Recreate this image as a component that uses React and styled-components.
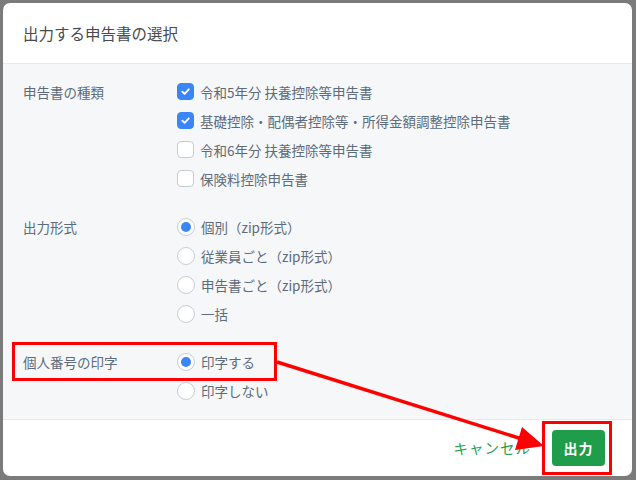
import styled, { createGlobalStyle } from 'styled-components';

const GlobalStyle = createGlobalStyle`
    html, body {
        margin: 0;
        padding: 0;
        width: 636px;
        height: 480px;
        overflow: hidden;
    }
    body {
        font-family: "Noto Sans CJK JP", "Noto Sans", sans-serif;
        background: #7b7b7b;
    }
`

const Backdrop = styled.div`
    position: relative;
    width: 636px;
    height: 480px;
    box-sizing: border-box;
    padding: 3px 4px 4px 3px;
    display: flex;
`

const Modal = styled.div`
    flex: 1;
    display: flex;
    flex-direction: column;
    background: #ffffff;
    border-radius: 7px;
    overflow: hidden;
`

const Header = styled.div`
    height: 62px;
    box-sizing: border-box;
    display: flex;
    align-items: center;
    padding: 0 20px 1px;
    border-bottom: 1px solid #e6e9ec;
    font-size: 15.5px;
    color: #474b50;
`

const Body = styled.div`
    flex: 1;
    background: #f5f7f9;
    padding: 13px 20px 14px;
    display: flex;
    flex-direction: column;
    gap: 19px;
    border-bottom: 1px solid #e6e9ec;
`

const Section = styled.div`
    display: grid;
    grid-template-columns: 154px 1fr;
`

const Label = styled.div`
    height: 29px;
    display: flex;
    align-items: center;
    font-size: 13.5px;
    color: #5d6b7a;
`

const Options = styled.div`
    display: flex;
    flex-direction: column;
`

const Option = styled.label`
    height: 29px;
    display: flex;
    align-items: center;
    gap: 6px;
    font-size: 13.5px;
    color: #5d6b7a;
`

const Check = styled.span`
    width: 17px;
    height: 17px;
    box-sizing: border-box;
    border-radius: 4px;
    border: 1px solid ${p => (p.$on ? '#3b86f6' : '#c3cbd3')};
    background: ${p => (p.$on ? '#3b86f6' : '#ffffff')};
    display: flex;
    align-items: center;
    justify-content: center;
`

const Radio = styled.span`
    width: 18px;
    height: 18px;
    box-sizing: border-box;
    border-radius: 50%;
    border: 1px solid #c6cdd5;
    background: #ffffff;
    display: flex;
    align-items: center;
    justify-content: center;

    &::after {
        content: "";
        width: 10px;
        height: 10px;
        border-radius: 50%;
        background: ${p => (p.$on ? '#3b86f6' : 'transparent')};
    }
`

const Footer = styled.div`
    height: 55px;
    display: flex;
    align-items: center;
    justify-content: flex-end;
    gap: 21px;
    padding: 0 27px 1px 0;
`

const CancelLink = styled.a`
    font-size: 14.5px;
    color: #2a9d52;
    text-decoration: none;
    letter-spacing: 1px;
`

const SubmitButton = styled.button`
    width: 53px;
    height: 36px;
    border: none;
    border-radius: 4px;
    background: #1f9d4b;
    color: #ffffff;
    font-family: inherit;
    font-size: 14px;
    font-weight: 700;
    letter-spacing: 1px;
`

const Annotation = styled.svg`
    position: absolute;
    left: 0;
    top: 0;
    pointer-events: none;
`

const Tick = () => (
    <svg width="11" height="11" viewBox="0 0 12 12">
        <path d="M2.5 6.2 L5 8.6 L9.6 3.6" fill="none" stroke="#fff" strokeWidth="2" strokeLinecap="round" strokeLinejoin="round" />
    </svg>
)

const sections = [
    {
        label: '申告書の種類',
        type: 'check',
        items: [
            ['令和5年分 扶養控除等申告書', true],
            ['基礎控除・配偶者控除等・所得金額調整控除申告書', true],
            ['令和6年分 扶養控除等申告書', false],
            ['保険料控除申告書', false],
        ],
    },
    {
        label: '出力形式',
        type: 'radio',
        items: [
            ['個別（zip形式）', true],
            ['従業員ごと（zip形式）', false],
            ['申告書ごと（zip形式）', false],
            ['一括', false],
        ],
    },
    {
        label: '個人番号の印字',
        type: 'radio',
        items: [
            ['印字する', true],
            ['印字しない', false],
        ],
    },
]

const App = () => {
    return (
        <Backdrop>
            <GlobalStyle />
            <Modal>
                <Header>出力する申告書の選択</Header>
                <Body>
                    {sections.map(s => (
                        <Section key={s.label}>
                            <Label>{s.label}</Label>
                            <Options>
                                {s.items.map(([text, on]) => (
                                    <Option key={text}>
                                        {s.type === 'check'
                                            ? <Check $on={on}>{on && <Tick />}</Check>
                                            : <Radio $on={on} />}
                                        {text}
                                    </Option>
                                ))}
                            </Options>
                        </Section>
                    ))}
                </Body>
                <Footer>
                    <CancelLink href="#">キャンセル</CancelLink>
                    <SubmitButton>出力</SubmitButton>
                </Footer>
            </Modal>
            <Annotation width="636" height="480">
                <rect x="13.5" y="343.5" width="262" height="36" fill="none" stroke="#ff0000" strokeWidth="3" />
                <rect x="543.5" y="422.5" width="67" height="51" fill="none" stroke="#ff0000" strokeWidth="3" />
                <line x1="277" y1="362" x2="522" y2="439" stroke="#ff0000" strokeWidth="3.5" />
                <polygon points="544,446 522,427 515,450" fill="#ff0000" />
            </Annotation>
        </Backdrop>
    )
}

export default App;
